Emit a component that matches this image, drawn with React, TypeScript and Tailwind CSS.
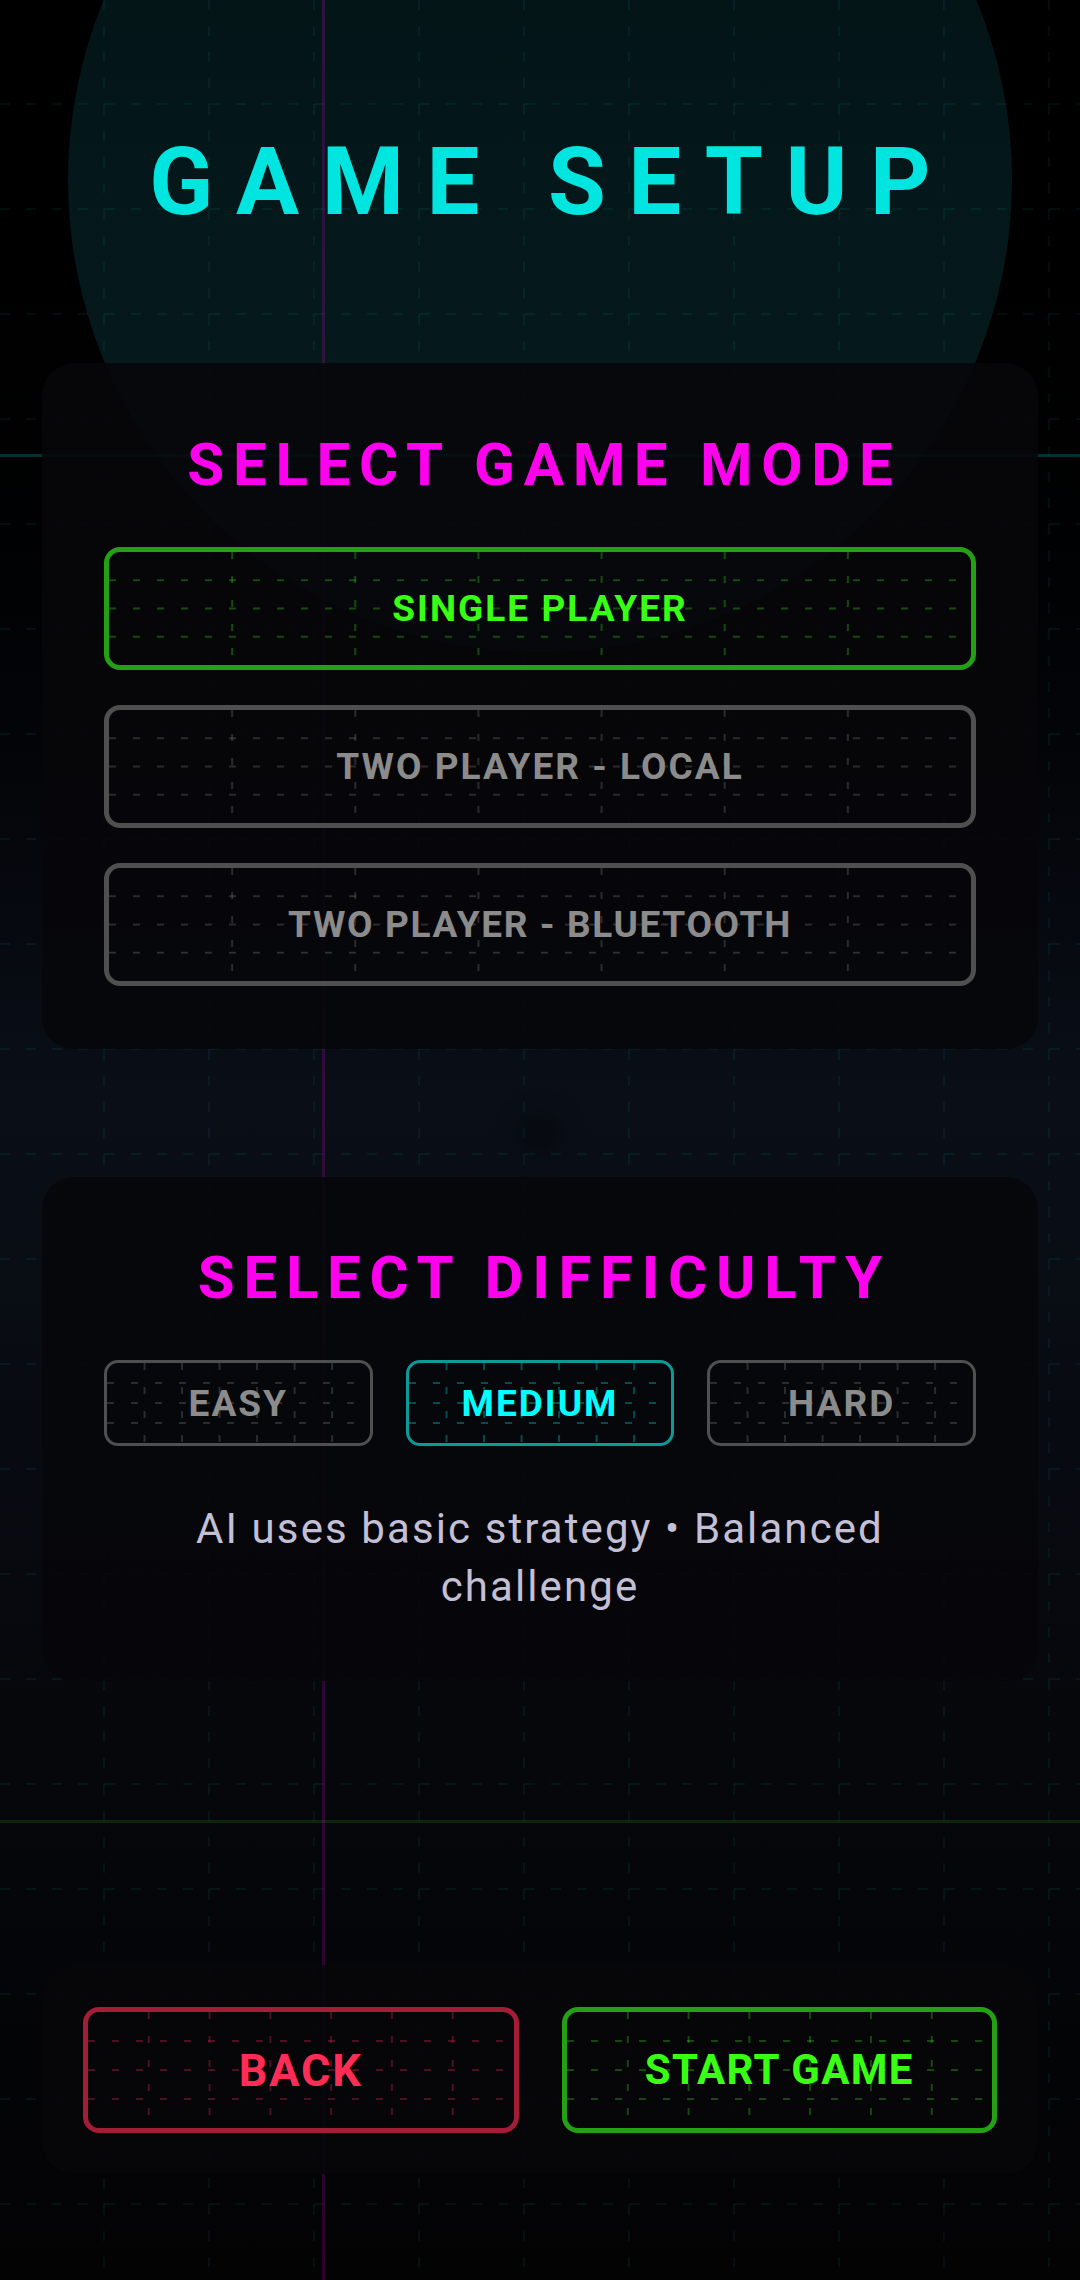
import React from 'react';

type Tone = 'green' | 'gray' | 'cyan' | 'red';

const TONES: Record<Tone, { border: string; text: string; line: string }> = {
  green: { border: 'border-[#23a013]', text: 'text-[#39ff14]', line: '#39ff14' },
  gray: { border: 'border-[#4f4f4f]', text: 'text-[#8b8b8b]', line: '#8b8b8b' },
  cyan: { border: 'border-[#0a9a9a]', text: 'text-[#00ffff]', line: '#00ffff' },
  red: { border: 'border-[#a31d37]', text: 'text-[#ff2d55]', line: '#ff2d55' },
};

// 7 x 4 dashed grid drawn inside every neon button
function ButtonGrid({ color }: { color: string }) {
  const xs = [1, 2, 3, 4, 5, 6].map((i) => `${((i / 7) * 100).toFixed(3)}%`);
  const ys = ['25%', '50%', '75%'];
  return (
    <svg className="pointer-events-none absolute inset-0 h-full w-full" aria-hidden="true">
      <g stroke={color} strokeOpacity={0.28} strokeWidth={2} strokeDasharray="7 17">
        {xs.map((x) => (
          <line key={x} x1={x} x2={x} y1="0" y2="100%" />
        ))}
        {ys.map((y) => (
          <line key={y} x1="0" x2="100%" y1={y} y2={y} />
        ))}
      </g>
    </svg>
  );
}

type Size = 'mode' | 'level' | 'action';

function NeonButton({
  label,
  tone,
  size,
  type = 'text-[37px] tracking-[0.055em]',
}: {
  label: string;
  tone: Tone;
  size: Size;
  type?: string;
}) {
  const t = TONES[tone];
  const shape =
    size === 'level'
      ? 'h-[86px] rounded-[14px] border-[3px]'
      : size === 'mode'
        ? 'h-[123px] rounded-[16px] border-[5px]'
        : 'h-[126px] flex-1 rounded-[16px] border-[5px]';
  return (
    <button
      type="button"
      className={`relative flex w-full items-center justify-center overflow-hidden ${shape} ${t.border}`}
    >
      <ButtonGrid color={t.line} />
      <span className={`relative font-bold leading-none ${type} ${t.text}`}>{label}</span>
    </button>
  );
}

function Card({ className, children }: { className: string; children: React.ReactNode }) {
  return <section className={`mx-[42px] rounded-[32px] bg-[#07070a]/90 ${className}`}>{children}</section>;
}

function CardTitle({ children }: { children: React.ReactNode }) {
  return (
    <h2 className="pl-[0.145em] text-center text-[60px] font-bold leading-none tracking-[0.145em] text-[#ff00ee]">
      {children}
    </h2>
  );
}

export default function App() {
  return (
    <div className="relative min-h-[2280px] w-full overflow-hidden bg-linear-to-b from-black from-3% via-[#0a0f17] via-48% to-[#030304] font-['Roboto',sans-serif]">
      {/* backdrop: glow disc, dashed grid and the three accent rails */}
      <div className="absolute left-1/2 top-[-292px] h-[944px] w-[944px] -translate-x-1/2 rounded-full bg-linear-to-b from-[#021113] to-[#071d20]" />
      <svg className="absolute inset-0 h-full w-full" aria-hidden="true">
        <defs>
          <pattern id="bg-grid" width="105" height="105" patternUnits="userSpaceOnUse">
            <g stroke="#00e5e5" strokeOpacity="0.06" strokeWidth="2" strokeDasharray="10 16">
              <line x1="0" y1="104" x2="105" y2="104" />
              <line x1="104" y1="0" x2="104" y2="105" />
            </g>
          </pattern>
        </defs>
        <rect width="100%" height="100%" fill="url(#bg-grid)" />
      </svg>
      <div className="absolute inset-x-0 top-[454px] h-[3px] bg-[#00e5e5]/[0.22]" />
      <div className="absolute inset-x-0 top-[1820px] h-[3px] bg-[#39ff14]/[0.13]" />
      <div className="absolute inset-y-0 left-[322px] w-[3px] bg-[#ff00ff]/[0.16]" />
      <div className="absolute left-[520px] top-[1114px] h-[40px] w-[40px] rounded-full bg-black/40 blur-md" />

      <div className="relative flex flex-col">
        <header className="flex h-[363px] items-center justify-center">
          <h1 className="pl-[0.24em] text-[94px] font-bold leading-none tracking-[0.24em] text-[#00e5e0]">
            GAME SETUP
          </h1>
        </header>

        <Card className="px-[62px] pb-[63px] pt-[72px]">
          <CardTitle>SELECT GAME MODE</CardTitle>
          <div className="mt-[52px] flex flex-col gap-[35px]">
            <NeonButton label="SINGLE PLAYER" tone="green" size="mode" />
            <NeonButton label="TWO PLAYER - LOCAL" tone="gray" size="mode" />
            <NeonButton label="TWO PLAYER - BLUETOOTH" tone="gray" size="mode" type="text-[37px] tracking-[0.045em]" />
          </div>
        </Card>

        <div className="h-[128px]" />

        <Card className="px-[62px] pb-[65px] pt-[71px]">
          <CardTitle>SELECT DIFFICULTY</CardTitle>
          <div className="mt-[52px] grid grid-cols-3 gap-[33px]">
            <NeonButton label="EASY" tone="gray" size="level" />
            <NeonButton label="MEDIUM" tone="cyan" size="level" />
            <NeonButton label="HARD" tone="gray" size="level" />
          </div>
          <p className="mt-[54px] text-center text-[42px] leading-[58px] tracking-[0.05em] text-[#c3bfd4]">
            AI uses basic strategy • Balanced challenge
          </p>
        </Card>

        <div className="h-[284px]" />

        <Card className="flex gap-[43px] px-[41px] pb-[41px] pt-[42px]">
          <NeonButton label="BACK" tone="red" size="action" type="text-[45px] tracking-[0.04em]" />
          <NeonButton label="START GAME" tone="green" size="action" type="text-[42px] tracking-[0.03em]" />
        </Card>
      </div>
    </div>
  );
}
